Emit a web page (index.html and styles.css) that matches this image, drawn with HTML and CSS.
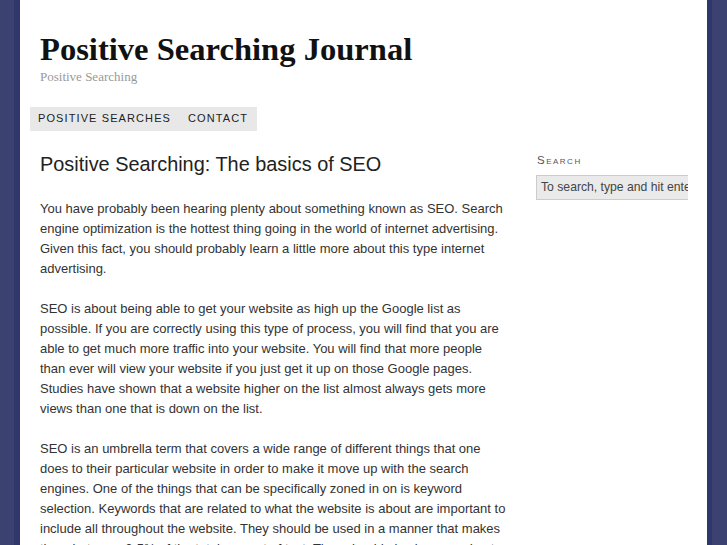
FILE: index.html
```html
<!DOCTYPE html>
<html>
<head>
<meta charset="utf-8">
<link rel="stylesheet" href="styles.css">
</head>
<body>
<div class="page">
  <header class="masthead">
    <h1 class="site-title">Positive Searching Journal</h1>
    <p class="tagline">Positive Searching</p>
  </header>
  <nav class="nav">
    <a class="nav-item">Positive Searches</a>
    <a class="nav-item">Contact</a>
  </nav>
  <div class="columns">
    <main class="content">
      <h2 class="post-title">Positive Searching: The basics of SEO</h2>
      <p>You have probably been hearing plenty about something known as SEO. Search engine optimization is the hottest thing going in the world of internet advertising. Given this fact, you should probably learn a little more about this type internet advertising.</p>
      <p>SEO is about being able to get your website as high up the Google list as possible. If you are correctly using this type of process, you will find that you are able to get much more traffic into your website. You will find that more people than ever will view your website if you just get it up on those Google pages. Studies have shown that a website higher on the list almost always gets more views than one that is down on the list.</p>
      <p>SEO is an umbrella term that covers a wide range of different things that one does to their particular website in order to make it move up with the search engines. One of the things that can be specifically zoned in on is keyword selection. Keywords that are related to what the website is about are important to include all throughout the website. They should be used in a manner that makes them between 2-5% of the total amount of text. They should also be spread out evenly.</p>
    </main>
    <aside class="sidebar">
      <h3 class="widget-title">Search</h3>
      <div class="search-box">To search, type and hit enter</div>
    </aside>
  </div>
</div>
</body>
</html>
```
FILE: styles.css
```css
html, body {
  margin: 0;
  padding: 0;
}
body {
  background: #3b4271;
  font-family: "Liberation Sans", Arial, sans-serif;
  color: #333;
  overflow: hidden;
}
.page {
  width: 687px;
  margin: 0 auto;
  background: #fff;
  min-height: 545px;
  box-shadow: -6px 0 0 #30376a, 5px 0 0 #30376a;
}
.masthead {
  padding: 29px 20px 0 20px;
}
.site-title {
  margin: 0;
  font-family: "Liberation Serif", "Times New Roman", serif;
  font-weight: bold;
  font-size: 32.6px;
  line-height: 40px;
  color: #111;
}
.tagline {
  margin: 0;
  font-family: "Liberation Serif", "Times New Roman", serif;
  font-size: 13px;
  line-height: 16px;
  color: #999;
}
.nav {
  display: inline-flex;
  margin: 22px 0 0 10px;
  background: #e8e8e8;
  padding: 0 9px 0 8px;
  gap: 17px;
}
.nav-item {
  font-size: 11px;
  letter-spacing: 1.1px;
  text-transform: uppercase;
  line-height: 23px;
  padding-bottom: 1px;
  color: #222;
}
.columns {
  display: flex;
  padding: 0 19px 0 20px;
}
.content {
  width: 468px;
  flex: none;
}
.post-title {
  margin: 21px 0 0 0;
  font-size: 19.9px;
  font-weight: normal;
  line-height: 24px;
  color: #222;
}
.content p {
  margin: 20px 0 0 0;
  font-size: 13px;
  line-height: 20px;
}
.content .post-title + p {
  margin-top: 23px;
}
.sidebar {
  margin-left: 28px;
  width: 152px;
  flex: none;
}
.widget-title {
  margin: 22px 0 0 1px;
  font-size: 11.5px;
  font-weight: normal;
  font-variant: small-caps;
  letter-spacing: 1.5px;
  line-height: 14px;
  color: #555;
}
.search-box {
  box-sizing: border-box;
  margin-top: 8px;
  height: 25px;
  border: 1px solid #ccc;
  border-right: none;
  background: #eaeaea;
  font-size: 12.2px;
  line-height: 23px;
  padding-left: 4px;
  white-space: nowrap;
  overflow: hidden;
  color: #444;
}
```
